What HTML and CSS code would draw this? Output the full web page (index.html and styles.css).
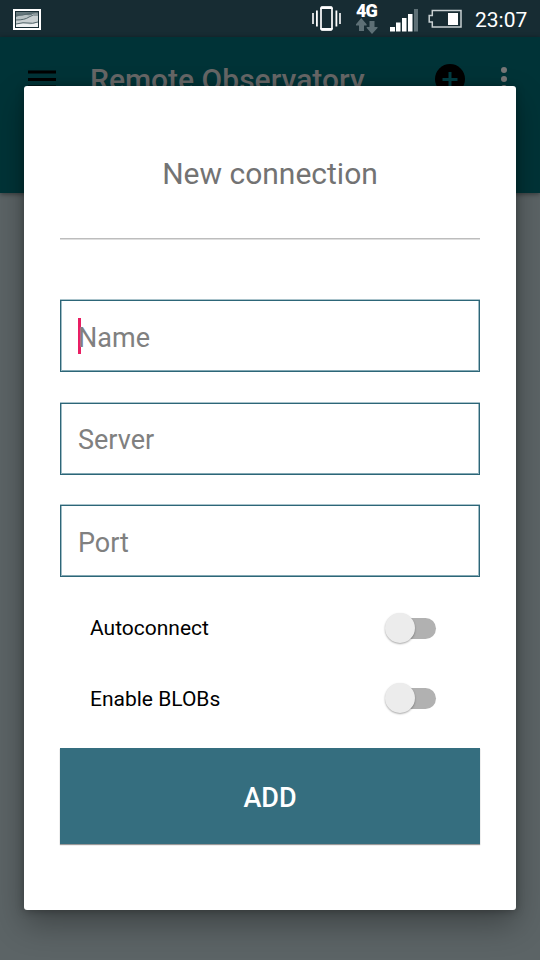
FILE: index.html
```html
<!DOCTYPE html>
<html lang="en">
<head>
<meta charset="utf-8">
<title>Remote Observatory</title>
<link rel="stylesheet" href="styles.css">
</head>
<body>
<header class="statusbar">
  <svg class="picture" width="28" height="21" viewBox="0 0 28 21">
    <path fill="#fff" d="M0 0h28v21H0z"/><path fill="#172c33" d="M2 2h24v17H2z"/>
    <path fill="#65777c" d="M3 3h22v15H3z"/>
    <path fill="#b7c1c3" d="M3 8Q9 5 14 6T25 4v12H3z"/>
    <path fill="#c8cfd1" d="M3 11Q13 11 17 7T25 5v9L3 16z"/>
    <path fill="#eef1f2" d="M3 15q8-1 12 0t10-2v5H3z"/>
    <path fill="none" stroke="#54676c" d="M3 6q6 1 11-1t11-1M3 11q9 0 13-3t9-2M3 15q8-2 12-1t10-1"/>
  </svg>
  <svg class="vibrate" width="30" height="26" viewBox="0 0 30 26">
    <rect x="9" y="1.2" width="11" height="22.600" rx="1.500" fill="none" stroke="#fff" stroke-width="1.700"/>
    <path fill="#fff" d="M9 .5h11l1 2.500H8zM8 22h13l-1 2.500H9zM4 4.500h1.800v16H4zM23.500 4.500h1.800v16h-1.800zM.2 7h1.600v11H.2zM27.200 7h1.600v11h-1.600z"/>
  </svg>
  <div class="network">
    <span class="network-type">4G</span>
    <svg width="22" height="16" viewBox="0 0 22 16">
      <path fill="#5e7076" d="M5.200 0 10.600 6.200V7.500H8V13H3V7.500H0V6.200zM13.500 3h5v6H21.500v1L16 16 10.700 10V9h2.800z"/>
    </svg>
  </div>
  <svg class="signal" width="28" height="23" viewBox="0 0 28 23">
    <path fill="#fff" d="M0 18h5v4.500H0zM6 13.500h4.500v9H6zM12 9h4.500v13.500H12zM18 5h4.500v17.500H18z"/>
    <path fill="#5e7076" d="M24 0h4v22.500h-4z"/>
  </svg>
  <svg class="battery" width="35" height="20" viewBox="0 0 35 20">
    <path fill="none" stroke="#c8d0d2" stroke-width="1.500" d="M4.300 1.500H33V18H4.300V13H1.200V6.500H4.300z"/>
    <path fill="#fff" d="M20 4h10v12H20z"/>
  </svg>
  <time class="clock">23:07</time>
</header>
<nav class="appbar">
  <svg class="menu" width="28" height="20" viewBox="0 0 28 20"><path d="M0 .5h28v3H0zM0 8h28v3H0zM0 15.500h28v3H0z"/></svg>
  <span class="app-title">Remote Observatory</span>
  <svg class="plus" width="30" height="30" viewBox="0 0 30 30"><circle cx="15" cy="15" r="15"/><path fill="none" stroke="#003d43" stroke-width="3" d="M7.500 15.500h15M15 8v15"/></svg>
  <svg class="more" width="6" height="24" viewBox="0 0 6 24"><circle cx="3" cy="3" r="3"/><circle cx="3" cy="12" r="3"/><circle cx="3" cy="21" r="3"/></svg>
</nav>
<main class="dialog">
  <h1 class="title">New connection</h1>
  <div class="fields">
    <div class="field focused">Name</div>
    <div class="field">Server</div>
    <div class="field">Port</div>
  </div>
  <div class="option"><span>Autoconnect</span><span class="switch"></span></div>
  <div class="option"><span>Enable BLOBs</span><span class="switch"></span></div>
  <button class="add">ADD</button>
</main>
</body>
</html>
```
FILE: styles.css
```css
* { box-sizing: border-box; }
body {
  margin: 0;
  width: 540px;
  height: 960px;
  overflow: hidden;
  position: relative;
  background: #5c6466;
  font-family: Roboto, "Liberation Sans", sans-serif;
}
svg { display: block; flex: none; }

.statusbar {
  height: 37px;
  display: flex;
  align-items: flex-start;
  background: #172c33;
  color: #fff;
}
.picture { margin: 9px 0 0 13px; }
.vibrate { margin: 6px 0 0 271px; }
.network { width: 23px; margin: 2px 0 0 14px; }
.network-type {
  display: block;
  height: 16px;
  font-size: 18px;
  line-height: 17px;
  font-weight: 900;
  letter-spacing: -1px;
}
.signal { margin: 9px 0 0 11px; }
.battery { margin: 9px 0 0 10px; }
.clock {
  margin-left: 12px;
  font-size: 21px;
  line-height: 40px;
}

.appbar {
  height: 156px;
  display: flex;
  align-items: flex-start;
  background: #003337;
  box-shadow: 0 1px 5px rgba(0, 0, 0, .45);
}
.menu { margin: 33px 0 0 28px; }
.app-title {
  width: 345px;
  margin: 25px 0 0 34px;
  font-size: 30px;
  line-height: 36px;
  font-weight: 500;
  color: #666;
}
.plus { margin-top: 27px; }
.more { margin: 30px 0 0 36px; fill: #777; }

.dialog {
  position: absolute;
  left: 24px;
  top: 86px;
  width: 492px;
  height: 824px;
  padding: 0 36px;
  display: flex;
  flex-direction: column;
  background: #fff;
  border-radius: 3px;
  box-shadow: 0 14px 32px rgba(0, 0, 0, .32), 0 1px 8px rgba(0, 0, 0, .28);
}
.title {
  height: 154px;
  margin: 0;
  padding-top: 70px;
  border-bottom: 1px solid #dedede;
  box-shadow: inset 0 -1px #bdbdbd;
  color: #737373;
  font-size: 30px;
  line-height: 36px;
  font-weight: 400;
  text-align: center;
}
.fields {
  display: flex;
  flex-direction: column;
  gap: 30.5px;
  margin: 60px 0 16px;
}
.field {
  height: 72px;
  padding: 3px 17px 0;
  display: flex;
  align-items: center;
  border: 1px solid #2d6678;
  box-shadow: 0 -1px #a9c3cb, inset 1px 0 #a0bcc5, inset -1px 0 #a0bcc5, inset 0 -1px #84a9b4;
  color: #808080;
  font-size: 27px;
}
.focused::before {
  content: "";
  width: 2.500px;
  height: 36px;
  margin: -3px -2.500px 0 0;
  background: #e91e63;
}
.option {
  height: 70.500px;
  padding: 0 44px 0 30px;
  display: flex;
  align-items: center;
  justify-content: space-between;
  color: #000;
  font-size: 21px;
}
.switch {
  position: relative;
  width: 46px;
  height: 21px;
  border-radius: 11px;
  background: #b1b1b1;
}
.switch::before {
  content: "";
  position: absolute;
  left: -5px;
  top: -5px;
  width: 30px;
  height: 30px;
  border-radius: 50%;
  background: #ececec;
  box-shadow: 0 1px 2px rgba(0, 0, 0, .35);
}
.add {
  height: 96px;
  margin: 14px 0 0;
  padding: 4px 0 0;
  border: 0;
  background: #356e7f;
  box-shadow: 0 1px 1px rgba(0, 0, 0, .4);
  color: #fff;
  font: 500 27px Roboto, "Liberation Sans", sans-serif;
}
```
